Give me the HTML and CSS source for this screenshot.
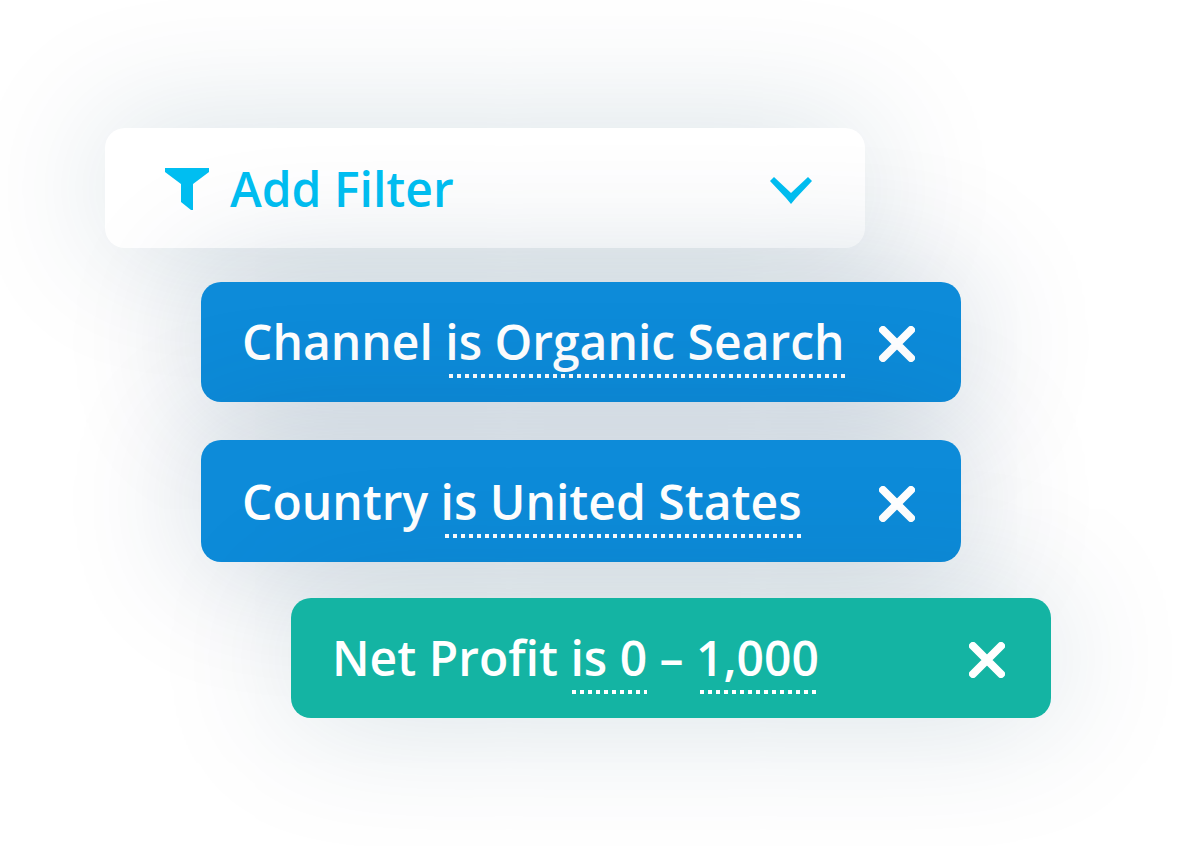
FILE: index.html
```
<!DOCTYPE html>
<html lang="en">
<head>
    <meta charset="UTF-8">
    <meta name="viewport" content="width=device-width, initial-scale=1.0">
    <title>Filters</title>
    <link rel="stylesheet" href="styles.css">
</head>
<body>
    <main class="filters">
        <button class="card add-filter" type="button">
            <svg class="funnel-icon" width="44" height="42" viewBox="0 0 44 42" fill="currentColor" aria-hidden="true">
                <path d="M0 0h44v4L28 16v26h-2l-10-8V16L0 4z"/>
            </svg>
            <span class="add-label">Add Filter</span>
            <svg class="chevron-icon" width="44" height="28" viewBox="0 0 44 28" fill="currentColor" aria-hidden="true">
                <path d="M5 0l17 16L39 0l4 4-16 17-5 6-5-6L1 4z"/>
            </svg>
        </button>

        <!-- Active filters -->
        <div class="card chip chip-dimension">
            <span class="chip-text">Channel <a class="chip-value" href="#">is Organic Search</a></span>
            <button class="chip-remove" type="button" aria-label="Remove Channel filter">
                <svg width="36" height="36" viewBox="0 0 36 36" fill="none" stroke="currentColor" stroke-width="8" stroke-linecap="round" aria-hidden="true">
                    <path d="M4 4l28 28M32 4L4 32"/>
                </svg>
            </button>
        </div>

        <div class="card chip chip-dimension chip-last">
            <span class="chip-text">Country <a class="chip-value" href="#">is United States</a></span>
            <button class="chip-remove" type="button" aria-label="Remove Country filter">
                <svg width="36" height="36" viewBox="0 0 36 36" fill="none" stroke="currentColor" stroke-width="8" stroke-linecap="round" aria-hidden="true">
                    <path d="M4 4l28 28M32 4L4 32"/>
                </svg>
            </button>
        </div>

        <div class="card chip chip-metric">
            <span class="chip-text">Net Profit <a class="chip-value chip-value-short" href="#">is 0</a> – <a class="chip-value" href="#">1,000</a></span>
            <button class="chip-remove" type="button" aria-label="Remove Net Profit filter">
                <svg width="36" height="36" viewBox="0 0 36 36" fill="none" stroke="currentColor" stroke-width="8" stroke-linecap="round" aria-hidden="true">
                    <path d="M4 4l28 28M32 4L4 32"/>
                </svg>
            </button>
        </div>
    </main>
</body>
</html>
```
FILE: styles.css
```
* {
    box-sizing: border-box;
}

body {
    margin: 0;
    background-color: #fff;
    font-family: 'Open Sans', 'Noto Sans', sans-serif;
    font-size: 48px;
    font-weight: 600;
    line-height: 64px;
}

.filters {
    display: flex;
    flex-direction: column;
    padding: 128px 105px;
}

.card {
    position: relative; /* Each shadow falls over the card above */
    display: flex;
    align-items: center;
    width: 100%;
    max-width: 760px;
    min-height: 120px;
    border: none;
    border-radius: 20px;
    box-shadow: 0 0 136px rgba(10, 65, 95, 0.17);
}

.add-filter {
    margin-bottom: 34px;
    padding: 2px 52px 0 60px;
    background-color: #fff;
    color: #00bff2;
    font: inherit;
    text-align: left;
    cursor: pointer;
}

.add-label {
    flex: 1;
    margin-left: 21px;
}

.chevron-icon {
    margin-top: 4px;
}

.chip {
    justify-content: space-between;
    margin-bottom: 38px;
    padding: 0 46px 0 41px;
    color: #fff;
}

.chip-dimension {
    margin-left: 96px;
    background-color: #0d8bd9;
    box-shadow: 0 0 136px rgba(10, 50, 95, 0.23);
}

/* Last of the dimension filters, before the metric ones */
.chip-last {
    min-height: 122px;
    margin-bottom: 36px;
    padding-top: 2px;
}

.chip-metric {
    margin-left: 186px;
    margin-bottom: 0;
    background-color: #14b4a3;
}

.chip-value {
    padding-bottom: 4px;
    color: inherit;
    text-decoration: none;
    /* Square dots, 4px wide with 4px between */
    background: linear-gradient(to right, #fff 4px, transparent 4px) 4px bottom / 8px 4px repeat-x;
}

.chip-value-short {
    background-position: 2px bottom;
}

.chip-remove {
    display: flex;
    margin-top: 4px;
    padding: 0;
    border: none;
    background: none;
    color: inherit;
    cursor: pointer;
}
```
